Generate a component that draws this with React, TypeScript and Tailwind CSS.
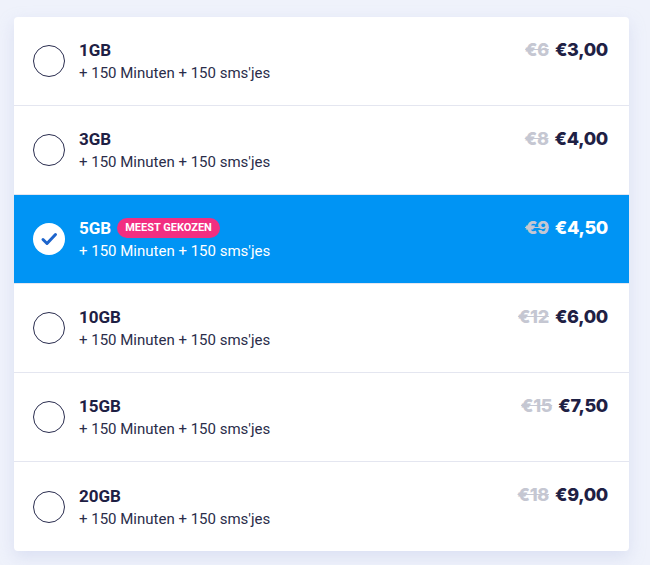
const plans = [
  { gb: "1GB", old: "€6", price: "€3,00" },
  { gb: "3GB", old: "€8", price: "€4,00" },
  { gb: "5GB", old: "€9", price: "€4,50", selected: true },
  { gb: "10GB", old: "€12", price: "€6,00" },
  { gb: "15GB", old: "€15", price: "€7,50" },
  { gb: "20GB", old: "€18", price: "€9,00" },
];

function Radio({ selected }: { selected?: boolean }) {
  if (selected) {
    return (
      <div className="w-8 h-8 rounded-full bg-white flex items-center justify-center shrink-0">
        <svg width="20" height="20" viewBox="0 0 20 20" fill="none">
          <path d="M4 10.5l4 4 8.5-9" stroke="#1d64cc" strokeWidth="3" strokeLinecap="round" strokeLinejoin="round" />
        </svg>
      </div>
    );
  }
  return <div className="w-8 h-8 rounded-full border-[1.5px] border-[#2a2d4f] shrink-0" />;
}

export default function App() {
  return (
    <div className="min-h-[565px] bg-[#eff2fb] pt-[17px] pl-[14px]" style={{ fontFamily: "Roboto, sans-serif" }}>
      <div className="w-[615px] bg-white rounded-[4px] shadow-[0_6px_16px_rgba(180,190,225,0.35)] overflow-hidden">
        {plans.map((p, i) => (
          <div
            key={p.gb}
            className={`h-[89px] flex items-center pl-[19px] pr-[21px] ${
              p.selected ? "bg-[#0094f4] text-white" : "text-[#1e2044]"
            } ${i < plans.length - 1 ? "border-b border-[#e4e6f0]" : ""}`}
          >
            <div className="flex items-center gap-[14px] flex-1">
              <Radio selected={p.selected} />
              <div className="flex flex-col gap-[2px]">
                <div className="flex items-center gap-[6px] h-[22px]">
                  <span className="text-[17px] font-bold leading-[22px]">{p.gb}</span>
                  {p.selected && (
                    <span className="bg-[#f22e81] text-white text-[11px] font-bold uppercase rounded-full px-[8px] h-[20px] flex items-center">
                      Meest gekozen
                    </span>
                  )}
                </div>
                <span className={`text-[15px] leading-[20px] ${p.selected ? "text-white" : "text-[#2a2d4a]"}`}>
                  + 150 Minuten + 150 sms'jes
                </span>
              </div>
            </div>
            <div
              className="self-start mt-[22px] flex items-center gap-[6px] text-[18px] leading-[22px] font-extrabold tracking-[-0.3px]"
              style={{ fontFamily: "Inter, sans-serif" }}
            >
              <span className="line-through text-[#c5c7d2]">{p.old}</span>
              <span className={p.selected ? "text-white" : "text-[#1e2044]"}>{p.price}</span>
            </div>
          </div>
        ))}
      </div>
    </div>
  );
}
